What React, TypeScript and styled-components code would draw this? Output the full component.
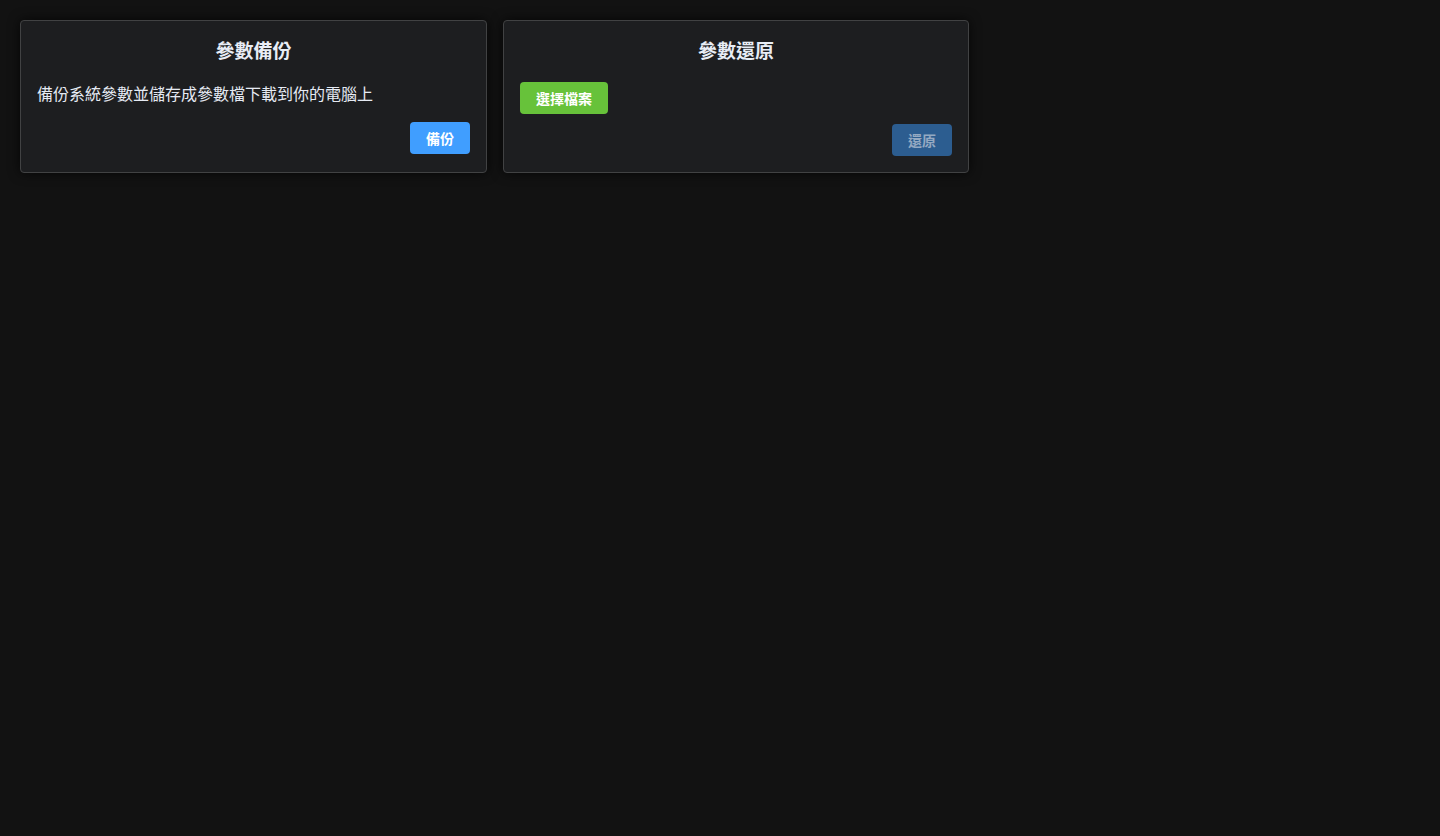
import React from "react";
import styled, { createGlobalStyle } from "styled-components";

const Global = createGlobalStyle`
  html, body { margin: 0; padding: 0; background: #121212; }
  body {
    font-family: "Noto Sans CJK TC", "Noto Sans", sans-serif;
    color: #e5eaf3;
    min-height: 836px;
  }
`;

const Page = styled.div`
  padding: 20px;
  display: grid;
  grid-template-columns: 467px 466px;
  gap: 16px;
  align-items: stretch;
`;

const Card = styled.section`
  background: #1d1e20;
  border: 1px solid #414243;
  border-radius: 4px;
  box-shadow: 0 0 12px rgba(0, 0, 0, 0.72);
  padding: 16px;
  display: flex;
  flex-direction: column;
`;

const Title = styled.h3`
  margin: 0 0 17px;
  font-size: 19px;
  line-height: 26px;
  padding-bottom: 2px;
  font-weight: 700;
  text-align: center;
  color: #e8edf5;
`;

const Desc = styled.p`
  margin: 0 0 16px;
  font-size: 16px;
  line-height: 22px;
  padding-bottom: 2px;
  color: #e5eaf3;
`;

const Row = styled.div<{ $end?: boolean; $gap?: number }>`
  display: flex;
  justify-content: ${(p) => (p.$end ? "flex-end" : "flex-start")};
  margin-top: ${(p) => p.$gap ?? 0}px;
`;

const Button = styled.button<{ $variant: "primary" | "success" }>`
  height: 32px;
  padding: 0 16px 1px;
  border: none;
  border-radius: 4px;
  font-family: inherit;
  font-size: 14px;
  font-weight: 700;
  color: #ffffff;
  background: ${(p) => (p.$variant === "primary" ? "#409eff" : "#67c23a")};
  cursor: pointer;
  &:disabled {
    background: #2c5d90;
    color: #94a9c2;
    cursor: not-allowed;
  }
`;

export default function App() {
  return (
    <>
      <Global />
      <Page>
        <Card>
          <Title>參數備份</Title>
          <Desc>備份系統參數並儲存成參數檔下載到你的電腦上</Desc>
          <Row $end>
            <Button $variant="primary">備份</Button>
          </Row>
        </Card>
        <Card>
          <Title>參數還原</Title>
          <Row>
            <Button $variant="success">選擇檔案</Button>
          </Row>
          <Row $end $gap={10}>
            <Button $variant="primary" disabled>
              還原
            </Button>
          </Row>
        </Card>
      </Page>
    </>
  );
}
